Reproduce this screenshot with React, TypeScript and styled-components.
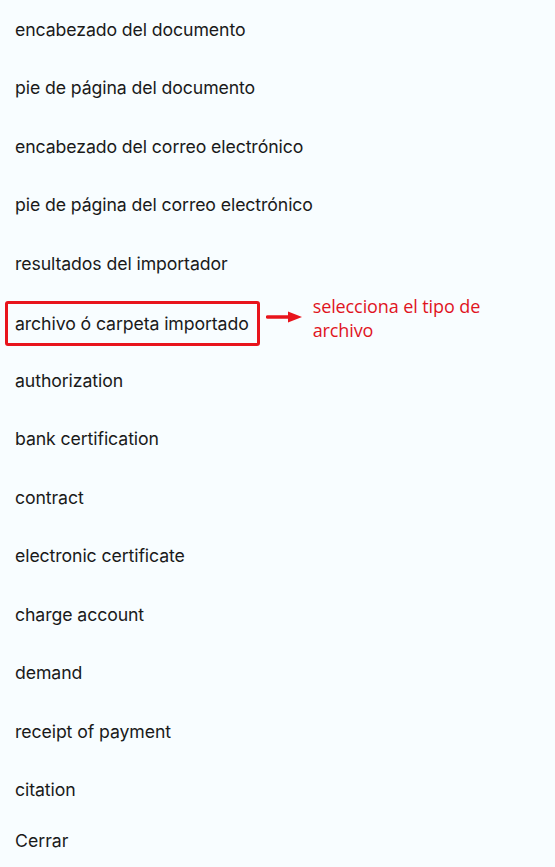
import React from "react";
import styled, { createGlobalStyle } from "styled-components";

const GlobalStyle = createGlobalStyle`
  body {
    margin: 0;
    background: #f8fdff;
    font-family: "Inter", "Noto Sans", sans-serif;
  }
`;

const items = [
  "encabezado del documento",
  "pie de página del documento",
  "encabezado del correo electrónico",
  "pie de página del correo electrónico",
  "resultados del importador",
  "archivo ó carpeta importado",
  "authorization",
  "bank certification",
  "contract",
  "electronic certificate",
  "charge account",
  "demand",
  "receipt of payment",
  "citation",
];

const HIGHLIGHTED = "archivo ó carpeta importado";

const App: React.FC = () => {
  return (
    <>
      <GlobalStyle />
      <Page>
        <Menu>
          {items.map((item) =>
            item === HIGHLIGHTED ? (
              <Item key={item}>
                <Highlight>{item}</Highlight>
                <Arrow width="37" height="14" viewBox="0 0 37 14">
                  <line x1="1.5" y1="7" x2="24" y2="7" stroke="#e8141c" strokeWidth="3.5" strokeLinecap="round" />
                  <polygon points="22,1.5 36,7 22,12.5" fill="#e8141c" />
                </Arrow>
                <Note>selecciona el tipo de archivo</Note>
              </Item>
            ) : (
              <Item key={item}>{item}</Item>
            )
          )}
        </Menu>
        <CloseButton>Cerrar</CloseButton>
      </Page>
    </>
  );
};

const Page = styled.div`
  width: 555px;
  min-height: 867px;
  background: #f8fdff;
  color: #1a1a1a;
`;

const Menu = styled.ul`
  list-style: none;
  margin: 0;
  padding: 0;
`;

const Item = styled.li`
  display: flex;
  align-items: center;
  height: 58.5px;
  padding: 0 15px;
  font-size: 17.7px;
  letter-spacing: -0.1px;
  box-sizing: border-box;
`;

const Highlight = styled.span`
  display: inline-block;
  margin-left: -10px;
  margin-top: 3px;
  padding: 9px 8px 9px 7px;
  border: 3px solid #e8141c;
  border-radius: 3px;
`;

const Arrow = styled.svg`
  margin-left: 6px;
  margin-top: -10px;
  flex-shrink: 0;
`;

const Note = styled.span`
  width: 185px;
  margin-left: 10px;
  margin-top: -7px;
  font-family: "Open Sans", "Noto Sans", sans-serif;
  font-size: 18px;
  line-height: 24px;
  color: #e0141e;
`;

const CloseButton = styled.button`
  display: block;
  background: none;
  border: none;
  padding: 11px 15px;
  margin: 0;
  font-family: "Inter", "Noto Sans", sans-serif;
  font-size: 17.7px;
  color: #1a1a1a;
  cursor: pointer;
`;

export default App;
